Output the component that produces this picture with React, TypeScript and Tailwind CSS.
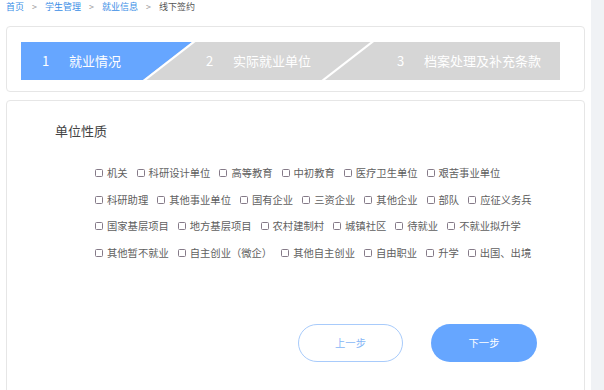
import React from 'react';

const crumbs = ['首页', '学生管理', '就业信息'];

const rows: string[][] = [
  ['机关', '科研设计单位', '高等教育', '中初教育', '医疗卫生单位', '艰苦事业单位'],
  ['科研助理', '其他事业单位', '国有企业', '三资企业', '其他企业', '部队', '应征义务兵'],
  ['国家基层项目', '地方基层项目', '农村建制村', '城镇社区', '待就业', '不就业拟升学'],
  ['其他暂不就业', '自主创业（微企）', '其他自主创业', '自由职业', '升学', '出国、出境'],
];

const steps = [
  { no: '1', label: '就业情况', width: 'w-[164px]' },
  { no: '2', label: '实际就业单位', width: 'w-[191px]' },
  { no: '3', label: '档案处理及补充条款', width: 'flex-1' },
];

function StepBar() {
  return (
    <div className="relative h-[38px] w-[539px]">
      {/* background shapes of the step bar */}
      <svg className="absolute inset-0" width="539" height="38" viewBox="0 0 539 38">
        <rect x="0" y="0" width="539" height="38" fill="#d6d6d6" />
        <polygon points="0,0 171,0 122,38 0,38" fill="#66a6ff" />
        <polygon points="171,0 174.5,0 125.5,38 122,38" fill="#ffffff" />
        <polygon points="349.5,0 353,0 304,38 300.5,38" fill="#ffffff" />
      </svg>
      <div className="relative flex h-full items-center pl-[21px] text-[13px] leading-[16px] text-white">
        {steps.map((s) => (
          <div key={s.no} className={`flex items-center ${s.width}`}>
            <span className="w-[27px]">{s.no}</span>
            <span className="whitespace-nowrap">{s.label}</span>
          </div>
        ))}
      </div>
    </div>
  );
}

function CheckItem({ label }: { label: string }) {
  return (
    <label className="mr-[9px] flex items-center whitespace-nowrap">
      <span className="mr-[4px] h-[8px] w-[8px] rounded-[1.5px] border border-[#857a88] bg-white" />
      <span className="text-[10.3px] leading-[14px] text-[#606060]">{label}</span>
    </label>
  );
}

export default function App() {
  return (
    <div className="flex h-[390px] w-full overflow-hidden bg-white [font-family:'Noto_Sans_CJK_SC',sans-serif]">
      <div className="w-[591px] shrink-0 px-[6px]">
        <div className="flex h-[26px] items-start pt-[1px] text-[9px] leading-[12px]">
          {crumbs.map((c) => (
            <React.Fragment key={c}>
              <span className="text-[#3a8ee6]">{c}</span>
              <span className="mx-[8px] text-[#999]">&gt;</span>
            </React.Fragment>
          ))}
          <span className="text-[#555]">线下签约</span>
        </div>

        <div className="rounded-[4px] border border-[#e6e6e6] pb-[11px] pl-[14px] pt-[15px]">
          <StepBar />
        </div>

        <div className="mt-[8px] h-[340px] rounded-[4px] border border-[#e6e6e6] pt-[22px]">
          <div className="pl-[48px] text-[13px] leading-[16px] text-[#444]">单位性质</div>
          <div className="mt-[21px] flex flex-col pl-[88px]">
            {rows.map((row, i) => (
              <div key={i} className="flex h-[26.5px] items-center">
                {row.map((label) => (
                  <CheckItem key={label} label={label} />
                ))}
              </div>
            ))}
          </div>
          <div className="mt-[58px] flex gap-[28px] pl-[291px]">
            <button className="h-[38px] w-[105px] rounded-full border border-[#a8cbfb] bg-white text-[10.3px] text-[#86b6f6]">
              上一步
            </button>
            <button className="h-[38px] w-[106px] rounded-full bg-[#66a6ff] text-[10.3px] text-white">
              下一步
            </button>
          </div>
        </div>
      </div>
      <div className="flex-1 bg-[#f0f2f5]" />
    </div>
  );
}
